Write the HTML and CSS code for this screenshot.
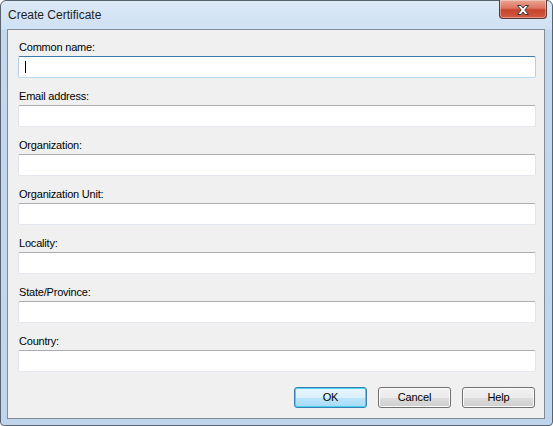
FILE: index.html
```html
<!DOCTYPE html>
<html>
<head>
<meta charset="utf-8">
<title>Create Certificate</title>
<link rel="stylesheet" href="styles.css">
</head>
<body>
<div class="window">
  <div class="titlebar">
    <span class="title">Create Certificate</span>
    <div class="close">
      <svg width="18" height="12" viewBox="0 0 18 12">
        <path d="M3.5 1.5 L7 1.5 L9 4 L11 1.5 L14.5 1.5 L10.8 6 L14.5 10.5 L11 10.5 L9 8 L7 10.5 L3.5 10.5 L7.2 6 Z" fill="#ffffff" stroke="#3a3a3a" stroke-width="1" stroke-linejoin="round"/>
      </svg>
    </div>
  </div>
  <div class="client">
    <div class="field">
      <div class="label">Common name:</div>
      <div class="textbox focused"><span class="caret"></span></div>
    </div>
    <div class="field">
      <div class="label">Email address:</div>
      <div class="textbox"></div>
    </div>
    <div class="field">
      <div class="label">Organization:</div>
      <div class="textbox"></div>
    </div>
    <div class="field">
      <div class="label">Organization Unit:</div>
      <div class="textbox"></div>
    </div>
    <div class="field">
      <div class="label">Locality:</div>
      <div class="textbox"></div>
    </div>
    <div class="field">
      <div class="label">State/Province:</div>
      <div class="textbox"></div>
    </div>
    <div class="field">
      <div class="label">Country:</div>
      <div class="textbox"></div>
    </div>
    <div class="buttons">
      <div class="button default">OK</div>
      <div class="button">Cancel</div>
      <div class="button">Help</div>
    </div>
  </div>
</div>
</body>
</html>
```
FILE: styles.css
```css
html, body {
  margin: 0;
  padding: 0;
  background: #ffffff;
}
body {
  width: 553px;
  height: 426px;
  overflow: hidden;
}
.window {
  box-sizing: border-box;
  width: 553px;
  height: 426px;
  border: 1px solid #59636e;
  border-radius: 6px 6px 4px 4px;
  background: linear-gradient(to bottom, #dce9f7 0px, #cfe1f4 28px, #c3d8ef 29px, #bfd5ee 100%);
  padding: 0 7px 6px 6px;
  display: flex;
  flex-direction: column;
  font-family: "Liberation Sans", Arial, sans-serif;
}
.titlebar {
  height: 28px;
  display: flex;
  align-items: flex-start;
  justify-content: space-between;
  margin-right: -2px;
}
.title {
  font-size: 12px;
  color: #1e1e1e;
  margin-left: 1px;
  margin-top: 7px;
  line-height: 15px;
}
.close {
  width: 46px;
  height: 18px;
  margin-top: -1px;
  border: 1px solid #5a3a36;
  border-top: none;
  border-radius: 0 0 4px 4px;
  background: linear-gradient(to bottom, #eaa595 0%, #dc7560 45%, #c7432c 55%, #d35a43 100%);
  display: flex;
  align-items: center;
  justify-content: center;
  box-shadow: inset 0 0 0 1px rgba(255,255,255,0.35);
}
.close svg {
  display: block;
  margin-top: 1px;
}
.client {
  flex: 1;
  border: 1px solid #838c96;
  background: #f0f0f0;
  padding: 11px 8px 0 10px;
  display: flex;
  flex-direction: column;
}
.field {
  display: flex;
  flex-direction: column;
  margin-bottom: 12px;
}
.label {
  font-size: 11px;
  line-height: 13px;
  height: 13px;
  color: #000000;
  letter-spacing: -0.2px;
  margin-left: 1px;
  margin-bottom: 2px;
}
.textbox {
  box-sizing: border-box;
  width: 518px;
  height: 22px;
  background: #ffffff;
  border: 1px solid #e2e3ea;
  border-top-color: #abadb3;
  border-bottom-color: #e3e9ef;
  border-radius: 2px;
  position: relative;
}
.textbox.focused {
  border-color: #b5cfe7;
  border-top-color: #3d7bad;
  border-bottom-color: #b7d9ed;
}
.caret {
  position: absolute;
  left: 6px;
  top: 4px;
  width: 1px;
  height: 12px;
  background: #000000;
}
.buttons {
  margin-top: 3px;
  display: flex;
  justify-content: flex-end;
  gap: 11px;
  padding-right: 1px;
}
.button {
  box-sizing: border-box;
  width: 73px;
  height: 21px;
  border: 1px solid #707070;
  border-radius: 3px;
  background: linear-gradient(to bottom, #f2f2f2 0%, #ebebeb 50%, #dddddd 50%, #cfcfcf 100%);
  box-shadow: inset 0 0 0 1px #fcfcfc;
  font-size: 11px;
  line-height: 19px;
  text-align: center;
  color: #000000;
  letter-spacing: -0.1px;
}
.button.default {
  border-color: #3c7fb1;
  background: linear-gradient(to bottom, #eaf6fd 0%, #d9f0fc 50%, #bee6fd 50%, #a7d9f5 100%);
  box-shadow: inset 0 0 0 1px #48d0f5;
}
```
